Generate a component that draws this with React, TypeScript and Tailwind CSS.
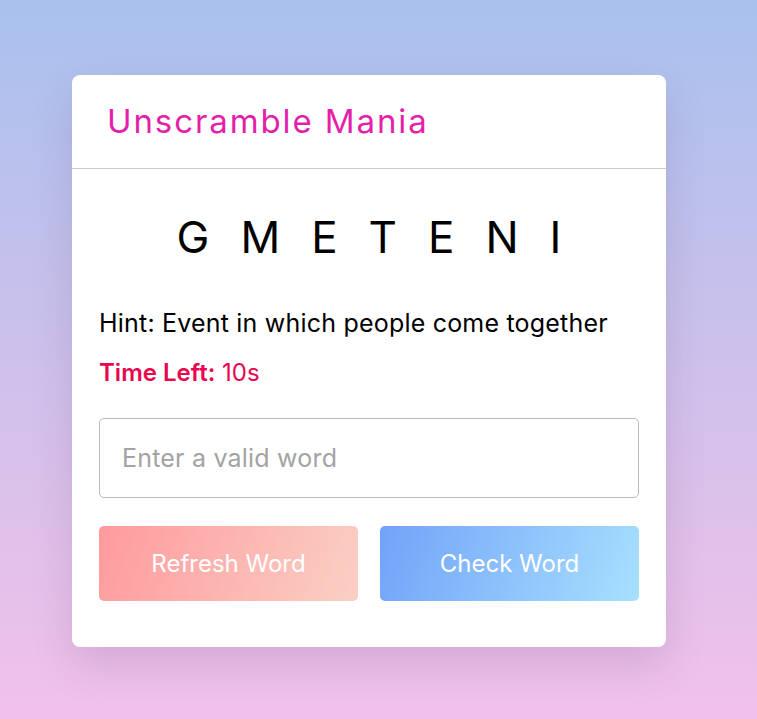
export default function App() {
  const font = { fontFamily: "Inter, 'Open Sans', sans-serif" };
  return (
    <div
      className="min-h-[719px] w-full bg-[linear-gradient(180deg,#a9c1ee_0%,#f2c1e9_100%)] pt-[75px] pl-[72px]"
      style={font}
    >
      <div className="w-[594px] h-[572px] rounded-[8px] bg-white shadow-[0_18px_40px_rgba(80,40,90,0.15)]">
        <div className="h-[94px] border-b border-[#cccccc] flex items-center pl-[35px]">
          <h1 className="text-[33px] font-normal text-[#e41faa] tracking-[1.9px]">Unscramble Mania</h1>
        </div>
        <div className="px-[27px]">
          <div className="pt-[42px] text-center text-[44px] leading-[52px] tracking-[31px] text-black pl-[31px]">
            GMETENI
          </div>
          <p className="mt-[45px] text-[25px] leading-[30px] tracking-[0.2px] text-black">
            Hint: Event in which people come together
          </p>
          <p className="mt-[20px] text-[24px] leading-[30px] text-[#e8064f]">
            <span className="font-semibold">Time Left:</span> <span>10s</span>
          </p>
          <input
            className="mt-[30px] block w-full h-[80px] rounded-[5px] border border-[#bbbbbb] px-[22px] text-[25px] tracking-[0.2px] outline-none placeholder:text-[#a3a3a3]"
            placeholder="Enter a valid word"
          />
          <div className="mt-[28px] flex gap-[22px]">
            <button className="flex-1 h-[75px] rounded-[5px] bg-[linear-gradient(110deg,#ff9a9e_0%,#fad0c4_100%)] text-white text-[24px]">
              Refresh Word
            </button>
            <button className="flex-1 h-[75px] rounded-[5px] bg-[linear-gradient(110deg,#70a3f8_0%,#a8e0ff_100%)] text-white text-[24px]">
              Check Word
            </button>
          </div>
        </div>
      </div>
    </div>
  );
}
